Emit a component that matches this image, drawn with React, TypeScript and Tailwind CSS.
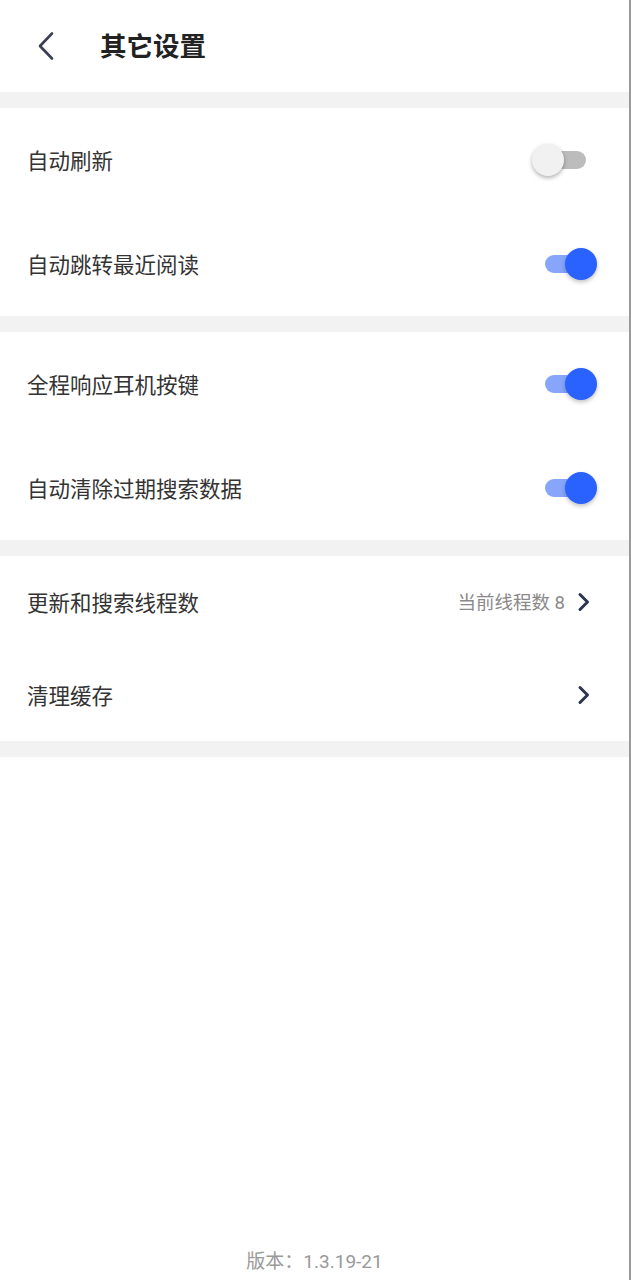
import React from "react";

const font = { fontFamily: '"Roboto", "Noto Sans CJK SC", sans-serif' };

function Toggle({ on }: { on: boolean }) {
  return (
    <div className="relative w-[68px] h-[34px]">
      <div
        className={
          "absolute left-[13px] top-[8px] w-[41px] h-[18px] rounded-full " +
          (on ? "bg-[#87a6fb]" : "bg-[#bcbcbc]")
        }
      />
      <div
        className={
          "absolute top-[1px] w-[32px] h-[32px] rounded-full " +
          (on
            ? "left-[33px] bg-[#2962ff] shadow-[0_2px_4px_rgba(0,0,0,0.25)]"
            : "left-[0px] bg-[#f1f1f1] shadow-[0_2px_4px_rgba(0,0,0,0.3)]")
        }
      />
    </div>
  );
}

function Chevron() {
  return (
    <svg width="14" height="20" viewBox="0 0 14 20" fill="none">
      <path d="M3 2.5 L10.5 10 L3 17.5" stroke="#2d3550" strokeWidth="3" strokeLinecap="round" strokeLinejoin="round" />
    </svg>
  );
}

function ToggleRow({ label, on }: { label: string; on: boolean }) {
  return (
    <div className="h-[104px] flex items-center justify-between pl-[27px] pr-[29px]">
      <span className="text-[21.5px] text-[#333333] mt-[5px]">{label}</span>
      <Toggle on={on} />
    </div>
  );
}

function Gap() {
  return <div className="h-[16px] bg-[#f2f2f2]" />;
}

export default function App() {
  return (
    <div className="w-[631px] h-[1280px] bg-white flex" style={font}>
      <div className="w-[629px] h-full flex flex-col">
        <div className="h-[92px] flex items-center">
          <div className="pl-[36px] w-[100px]">
            <svg width="22" height="30" viewBox="0 0 22 30" fill="none">
              <path d="M16 2.5 L4 15 L16 27.5" stroke="#3a3f51" strokeWidth="2.6" strokeLinecap="round" strokeLinejoin="round" />
            </svg>
          </div>
          <span className="text-[26.5px] font-bold text-[#222222] mt-[2px]">其它设置</span>
        </div>
        <Gap />
        <ToggleRow label="自动刷新" on={false} />
        <ToggleRow label="自动跳转最近阅读" on={true} />
        <Gap />
        <ToggleRow label="全程响应耳机按键" on={true} />
        <ToggleRow label="自动清除过期搜索数据" on={true} />
        <Gap />
        <div className="h-[92px] flex items-center justify-between pl-[27px] pr-[38px]">
          <span className="text-[21.5px] text-[#333333] mt-[5px]">更新和搜索线程数</span>
          <div className="flex items-center gap-[12px]">
            <span className="text-[18.5px] text-[#8a8a8a] mt-[3px]">当前线程数 8</span>
            <Chevron />
          </div>
        </div>
        <div className="h-[93px] flex items-center justify-between pl-[27px] pr-[38px]">
          <span className="text-[21.5px] text-[#333333] mt-[5px]">清理缓存</span>
          <Chevron />
        </div>
        <Gap />
        <div className="flex-1" />
        <div className="h-[40px] flex items-center justify-center text-[19px] text-[#999999]">
          <span className="mt-[4px]">版本：1.3.19-21</span>
        </div>
      </div>
      <div className="w-[2px] h-full bg-[#9a9a9a]" />
    </div>
  );
}
